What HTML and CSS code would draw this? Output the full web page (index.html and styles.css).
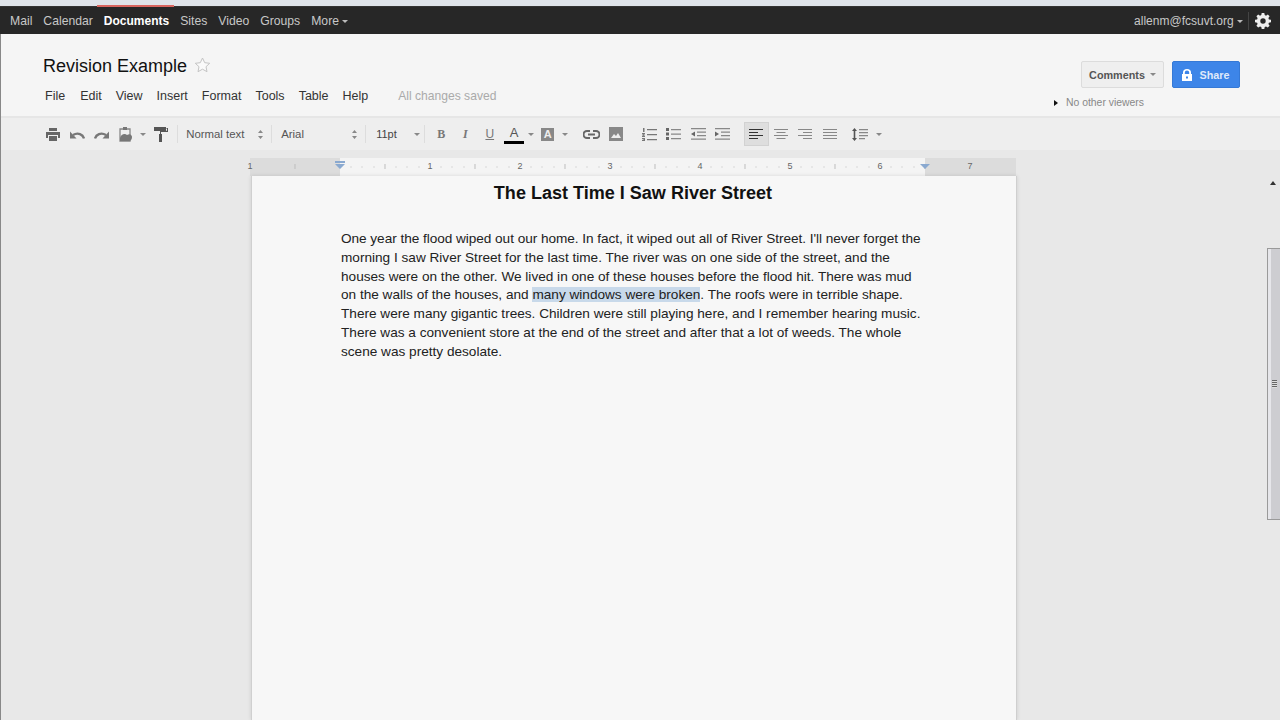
FILE: index.html
```html
<!DOCTYPE html>
<html lang="en">
<head>
<meta charset="utf-8">
<title>Revision Example</title>
<link rel="stylesheet" href="styles.css">
</head>
<body>
<div class="app">
  <div class="chrome-strip"><span class="active-mark"></span></div>
  <nav class="nav">
    <a class="nav-link nav-mail">Mail</a>
    <a class="nav-link">Calendar</a>
    <a class="nav-link nav-on">Documents</a>
    <a class="nav-link">Sites</a>
    <a class="nav-link">Video</a>
    <a class="nav-link">Groups</a>
    <a class="nav-link">More <i class="caret caret-light"></i></a>
    <span class="nav-space"></span>
    <a class="nav-link nav-user">allenm@fcsuvt.org <i class="caret caret-light"></i></a>
    <span class="nav-sep"></span>
    <svg class="gear" width="16" height="16" viewBox="0 0 16 16"><path fill="#eee" fill-rule="evenodd" d="M6.7 0h2.6l.4 2.1 1.3.6L12.800 1.500l1.800 1.800-1.200 1.800.5 1.300 2.100.4v2.500l-2.100.4-.5 1.300 1.200 1.800-1.800 1.800-1.800-1.200-1.300.5-.4 2.100H6.700l-.4-2.100-1.300-.5-1.800 1.200-1.800-1.800 1.200-1.800-.5-1.300L0 9.300V6.800l2.100-.4.500-1.300L1.400 3.300l1.800-1.800L5 2.700l1.300-.6zM8 5.300a2.700 2.700 0 1 0 0 5.400 2.700 2.700 0 0 0 0-5.400z"/></svg>
  </nav>
  <header class="doc-head">
    <div class="doc-left">
      <div class="title-row">
        <h1 class="doc-title">Revision Example</h1>
        <svg class="star" width="17" height="16" viewBox="0 0 17 16"><path fill="#fafafa" stroke="#c4c4c4" d="M8.500 1l2.200 4.700 5 .6-3.700 3.400 1 5-4.500-2.500L4 14.700l1-5L1.300 6.300l5-.6z"/></svg>
      </div>
      <div class="menu">
        <span class="menu-item">File</span><span class="menu-item">Edit</span><span class="menu-item">View</span><span class="menu-item">Insert</span><span class="menu-item">Format</span><span class="menu-item">Tools</span><span class="menu-item">Table</span><span class="menu-item">Help</span>
        <span class="saved">All changes saved</span>
      </div>
    </div>
    <div class="doc-right">
      <div class="buttons">
        <button class="btn btn-comments">Comments <i class="caret caret-grey"></i></button>
        <button class="btn btn-share">
          <svg width="10" height="12" viewBox="0 0 10 12"><path fill="#fff" fill-rule="evenodd" d="M1 5V3.500a4 3.500 0 0 1 8 0V5h1v7H0V5zm1.800 0h4.400V3.500a2.200 2 0 0 0-4.400 0zM4 7.500v2h2v-2z"/></svg>
          Share
        </button>
      </div>
      <div class="viewers"><i class="tri"></i>No other viewers</div>
    </div>
  </header>
  <div class="toolbar">
    <span class="tool w-print"><svg width="14" height="13" viewBox="0 0 14 13"><path fill="#666" d="M3 0h8v3H3zM0 4h14v6h-2V7H2v3H0zM3 8h8v5H3z"/></svg></span>
    <span class="tool w-24"><svg width="15" height="9" viewBox="0 0 15 9"><path fill="none" stroke="#777" stroke-width="2.400" d="M14 8.500C13 4.500 8 2 3 5"/><path fill="#777" d="M0 1.500v7h6.500z"/></svg></span>
    <span class="tool w-24"><svg width="15" height="9" viewBox="0 0 15 9"><path fill="none" stroke="#777" stroke-width="2.400" d="M1 8.500C2 4.500 7 2 12 5"/><path fill="#777" d="M15 1.500v7H8.500z"/></svg></span>
    <span class="tool w-24"><svg width="14" height="16" viewBox="0 0 14 16"><path fill="none" stroke="#888" stroke-width="1.300" d="M1 3h10v12H1z"/><path fill="#777" d="M4 1h4v3H4zM1 12c1-4 5-5 7-3 3-2 5 0 5 2s-1 4-3 4H1z"/></svg></span>
    <span class="tool w-caret"><i class="caret caret-grey"></i></span>
    <span class="tool w-roller"><svg width="14" height="15" viewBox="0 0 14 15"><path fill="#555" d="M0 0h12v4H0zM12.500 1H14v4H7v2h1v8H5V7h1V3.700h7V2h-.5z"/></svg></span>
    <span class="tb-sep sep-a"></span>
    <span class="tb-text t-style">Normal text</span><svg class="updown" width="5" height="9" viewBox="0 0 5 9"><path fill="#888" d="M2.500 0L5 3H0zM2.500 9L0 6h5z"/></svg>
    <span class="tb-sep sep-b"></span>
    <span class="tb-text t-font">Arial</span><svg class="updown" width="5" height="9" viewBox="0 0 5 9"><path fill="#888" d="M2.500 0L5 3H0zM2.500 9L0 6h5z"/></svg>
    <span class="tb-sep sep-c"></span>
    <span class="tb-text t-size">11pt</span><i class="caret caret-grey size-caret"></i>
    <span class="tb-sep sep-d"></span>
    <span class="tool w-b fmt fmt-b">B</span>
    <span class="tool w-24 fmt fmt-i">I</span>
    <span class="tool w-24 fmt fmt-u">U</span>
    <span class="tool w-24 fmt-color"><span class="fmt fmt-a">A</span><span class="color-bar"></span></span>
    <span class="tool w-caret2"><i class="caret caret-grey"></i></span>
    <span class="tool w-hl"><span class="hl-box">A</span></span>
    <span class="tool w-caret3"><i class="caret caret-grey"></i></span>
    <span class="tool w-link"><svg width="17" height="9" viewBox="0 0 17 9"><g fill="none" stroke="#666" stroke-width="2"><path d="M7 1H4a3.500 3.500 0 0 0 0 7h3M10 1h3a3.500 3.500 0 0 1 0 7h-3M5 4.500h7"/></g></svg></span>
    <span class="tool w-24"><svg width="14" height="14" viewBox="0 0 14 14"><path fill="#888" d="M0 0h14v14H0z"/><path fill="#eee" d="M2 11l3-4 2 2 2-3 3 5z"/></svg></span>
    <span class="tool w-num"><svg width="15" height="13" viewBox="0 0 15 13"><path fill="#777" d="M5 1h10v1.300H5zM5 6h10v1.300H5zM5 11h10v1.300H5zM1 0h1.500v4H1zM0 5h3v1L1.500 7.500H3V9H0V8l1.500-1.500H0zM0 10h3v3H0v-1h1.800v-.2H.6v-.6h1.200V11H0z"/></svg></span>
    <span class="tool w-24"><svg width="15" height="12" viewBox="0 0 15 12"><path fill="#666" d="M0 0h3v3H0zM0 4.500h3v3H0zM0 9h3v3H0z"/><path fill="#888" d="M5 1h10v1.300H5zM5 5.500h10v1.300H5zM5 10h10v1.300H5z"/></svg></span>
    <span class="tool w-24"><svg width="15" height="12" viewBox="0 0 15 12"><path fill="#888" d="M0 0h15v1.300H0zM6 3.500h9v1.300H6zM6 7h9v1.300H6zM0 10.500h15v1.300H0z"/><path fill="#666" d="M4 3.500v5L0 6z"/></svg></span>
    <span class="tool w-24"><svg width="15" height="12" viewBox="0 0 15 12"><path fill="#888" d="M0 0h15v1.300H0zM6 3.500h9v1.300H6zM6 7h9v1.300H6zM0 10.500h15v1.300H0z"/><path fill="#666" d="M0 3.500v5L4 6z"/></svg></span>
    <span class="tool w-al1 tool-on"><svg width="14" height="10" viewBox="0 0 14 10"><path fill="#333" d="M0 0h14v1H0zM0 3h9v1H0zM0 6h14v1H0zM0 9h9v1H0z"/></svg></span>
    <span class="tool w-24"><svg width="14" height="10" viewBox="0 0 14 10"><path fill="#888" d="M0 0h14v1H0zM2.500 3h9v1h-9zM0 6h14v1H0zM2.500 9h9v1h-9z"/></svg></span>
    <span class="tool w-24"><svg width="14" height="10" viewBox="0 0 14 10"><path fill="#888" d="M0 0h14v1H0zM5 3h9v1H5zM0 6h14v1H0zM5 9h9v1H5z"/></svg></span>
    <span class="tool w-24"><svg width="14" height="10" viewBox="0 0 14 10"><path fill="#888" d="M0 0h14v1H0zM0 3h14v1H0zM0 6h14v1H0zM0 9h14v1H0z"/></svg></span>
    <span class="tool w-ls"><svg width="16" height="13" viewBox="0 0 16 13"><path fill="#555" d="M2.500 0L5 3H3.300v7H5l-2.500 3L0 10h1.700V3H0z"/><path fill="#888" d="M7 1h9v1.300H7zM7 4h9v1.300H7zM7 7h9v1.300H7zM7 10h6v1.300H7z"/></svg></span>
    <span class="tool w-caret4"><i class="caret caret-grey"></i></span>
  </div>
  <main class="workspace">
    <svg class="ruler" width="769" height="18" viewBox="-3 0 769 18">
      <rect width="766" height="18" fill="#dcdcdc"/>
      <rect x="90" width="585" height="18" fill="#f4f4f4"/>
      <g class="ruler-ticks" stroke="#bdbdbd">
        <path d="M45 6v5M135 6v5M225 6v5M315 6v5M405 6v5M495 6v5M585 6v5M675 6v5"/>
      </g>
      <g class="ruler-minor" stroke="#d8d8d8">
        <path d="M101 8v2M112 8v2M124 8v2M146 8v2M157 8v2M169 8v2M191 8v2M202 8v2M214 8v2M236 8v2M247 8v2M259 8v2M281 8v2M292 8v2M304 8v2M326 8v2M337 8v2M349 8v2M371 8v2M382 8v2M394 8v2M416 8v2M427 8v2M439 8v2M461 8v2M472 8v2M484 8v2M506 8v2M517 8v2M529 8v2M551 8v2M562 8v2M574 8v2M596 8v2M607 8v2M619 8v2M641 8v2M652 8v2M664 8v2"/>
      </g>
      <g class="ruler-nums" text-anchor="middle">
        <text x="0" y="11">1</text><text x="180" y="11">1</text><text x="270" y="11">2</text><text x="360" y="11">3</text><text x="450" y="11">4</text><text x="540" y="11">5</text><text x="630" y="11">6</text><text x="720" y="11">7</text>
      </g>
      <path fill="#8aa9d0" d="M85 3h10v2H85zM85 6h10l-5 5z"/>
      <path fill="#8aa9d0" d="M670 6h10l-5 5z"/>
    </svg>
    <article class="page">
      <h2 class="page-title">The Last Time I Saw River Street</h2>
      <p class="page-text">
        <span class="ln ln-tight">One year the flood wiped out our home. In fact, it wiped out all of River Street. I'll never forget the</span>
        <span class="ln">morning I saw River Street for the last time. The river was on one side of the street, and the</span>
        <span class="ln">houses were on the other. We lived in one of these houses before the flood hit. There was mud</span>
        <span class="ln">on the walls of the houses, and <mark class="sel">many windows were broken</mark>. The roofs were in terrible shape.</span>
        <span class="ln">There were many gigantic trees. Children were still playing here, and I remember hearing music.</span>
        <span class="ln">There was a convenient store at the end of the street and after that a lot of weeds. The whole</span>
        <span class="ln">scene was pretty desolate.</span>
      </p>
    </article>
    <div class="scrollbar">
      <i class="scroll-up"></i>
      <div class="thumb"><span class="grip"></span></div>
    </div>
  </main>
</div>
</body>
</html>
```
FILE: styles.css
```css
* { box-sizing: border-box; }
html, body { margin: 0; height: 720px; overflow: hidden; }
body { font-family: "Liberation Sans", Arial, sans-serif; background: #e8e8e8; }
.app { width: 1280px; height: 720px; display: flex; flex-direction: column; border-left: 1px solid #888; }
.chrome-strip { height: 7px; background: #dfe4ea; border-bottom: 1px solid #333; margin-left: -1px; padding-left: 97px; padding-top: 5px; }
.active-mark { display: block; width: 77px; height: 2px; background: #d9655f; }
.nav { height: 27px; margin-left: -1px; background: #272727; display: flex; align-items: center; font-size: 12.200px; color: #c8c8c8; padding: 0 9px 0 10px; }
.nav-link { margin-right: 11px; white-space: nowrap; }
.nav-on { color: #fff; font-weight: 700; font-size: 12px; }
.nav-space { flex: 1; }
.nav-user { margin-right: 5px; font-size: 12px; }
.nav-sep { width: 1px; height: 18px; background: #444; margin-right: 6px; }
.caret { display: inline-block; width: 0; height: 0; border-left: 3px solid transparent; border-right: 3px solid transparent; border-top: 3px solid #999; vertical-align: middle; }
.caret-light { border-top-color: #bbb; }
.caret-grey { border-top-color: #888; }
.gear { display: block; }
.doc-head { height: 82px; background: #f5f5f5; display: flex; justify-content: space-between; padding: 0 40px 0 42px; }
.title-row { display: flex; align-items: center; height: 20px; margin-top: 22px; }
.doc-title { margin: 0; font-size: 18px; font-weight: 400; color: #111; }
.star { margin-left: 7px; margin-top: -3px; }
.menu { display: flex; align-items: center; margin-top: 12px; height: 16px; font-size: 12.500px; color: #333; padding-left: 2px; }
.menu-item { margin-right: 14px; }
.menu-item:nth-child(1) { margin-right: 15px; }
.saved { margin-left: 16px; color: #aaa; font-size: 12.100px; }
.doc-right { display: flex; flex-direction: column; align-items: flex-start; padding-top: 27px; }
.buttons { display: flex; gap: 8px; }
.btn { height: 27px; font: 700 10.800px "Liberation Sans", Arial, sans-serif; border-radius: 2px; padding: 0; display: flex; align-items: center; justify-content: center; }
.btn-comments { width: 83px; background: #efefef; border: 1px solid #dcdcdc; color: #555; gap: 5px; }
.btn-share { width: 68px; background: #3d85e8; border: 1px solid #3579d6; color: #dfe9fa; gap: 7px; }
.viewers { display: flex; align-items: center; font-size: 10.400px; color: #888; margin-top: 9px; margin-left: -27px; }
.tri { width: 0; height: 0; border-top: 3.500px solid transparent; border-bottom: 3.500px solid transparent; border-left: 4px solid #111; margin-right: 8px; }
.toolbar { height: 34px; background: #eeeeee; border-top: 2px solid #e6e6e6; display: flex; align-items: center; padding-left: 40px; font-size: 11px; color: #555; }
.tool { display: flex; align-items: center; justify-content: center; height: 24px; flex: none; }
.w-print { width: 24px; }
.w-24 { width: 24.400px; }
.w-caret { width: 10px; }
.w-roller { width: 26px; }
.tb-sep { width: 1px; height: 18px; background: #ddd; flex: none; }
.sep-a { margin-left: 3px; margin-right: 8px; }
.sep-b { margin: 0 9px 0 8px; }
.sep-c { margin: 0 10px 0 8px; }
.sep-d { margin: 0 0 0 4px; }
.tb-text { font-size: 11.400px; color: #555; flex: none; }
.t-style { width: 72px; }
.updown { flex: none; display: block; }
.t-font { width: 71px; }
.t-size { width: 38px; color: #444; font-size: 11px; }
.size-caret { flex: none; }
.w-b { width: 28px; padding-left: 4px; }
.fmt { font-family: "Liberation Serif", serif; font-size: 12px; color: #777; font-weight: 700; }
.fmt-i { font-style: italic; }
.fmt-u { font-family: "Liberation Sans", sans-serif; text-decoration: underline; font-weight: 400; }
.fmt-color { flex-direction: column; }
.fmt-a { font-family: "Liberation Sans", sans-serif; font-size: 13px; font-weight: 400; color: #555; line-height: 14px; margin-top: 1px; }
.color-bar { display: block; width: 20px; height: 3px; background: #000; margin-top: 1px; }
.w-caret2 { width: 10px; }
.w-hl { width: 23px; }
.hl-box { width: 13px; height: 13px; background: #888; color: #eee; font-size: 11px; line-height: 13px; text-align: center; font-weight: 700; }
.w-caret3 { width: 11px; }
.w-link { width: 33px; padding-left: 10px; }
.w-num { width: 34px; padding-left: 9px; }
.w-al1 { width: 25px; margin-left: 9px; }
.tool-on { background: #dedede; border: 1px solid #d2d2d2; }
.w-ls { width: 30px; padding-left: 6px; }
.w-caret4 { width: 13px; }
.workspace { flex: 1; position: relative; display: flex; flex-direction: column; align-items: flex-start; padding: 8px 0 0 246px; background: #e8e8e8; min-height: 0; }
.ruler { display: block; flex: none; }
.ruler-nums { font: 9px "Liberation Sans", Arial, sans-serif; fill: #666; }
.page { width: 766px; margin-left: 4px; flex: 1; background: #f7f7f7; border-left: 1px solid #d0d0d0; border-right: 1px solid #cfcfcf; box-shadow: 0 0 4px rgba(0,0,0,.12); padding-left: 89px; }
.page-title { margin: 7px 0 0; width: 584px; text-align: center; font-size: 18.050px; line-height: 20px; font-weight: 700; color: #111; }
.page-text { margin: 27.300px 0 0; font-size: 13.620px; line-height: 18.700px; color: #222; }
.ln { display: block; white-space: nowrap; }
.ln-tight { letter-spacing: -.04px; }
.sel { background: #c8d9ea; color: inherit; }
.scrollbar { position: absolute; right: 0; top: 0; bottom: 0; width: 13px; }
.scroll-up { position: absolute; top: 31px; left: 3px; width: 0; height: 0; border-left: 3px solid transparent; border-right: 3px solid transparent; border-bottom: 4px solid #333; }
.thumb { position: absolute; top: 98px; left: 0; width: 13px; height: 272px; background: linear-gradient(90deg, #e6e6ea 0 3px, #cdcdd1 3px); border: 1px solid #9a9a9a; border-right: 0; display: flex; align-items: center; justify-content: center; }
.grip { width: 5px; height: 8px; background: repeating-linear-gradient(#666 0 1px, #ddd 1px 2px); }
```
